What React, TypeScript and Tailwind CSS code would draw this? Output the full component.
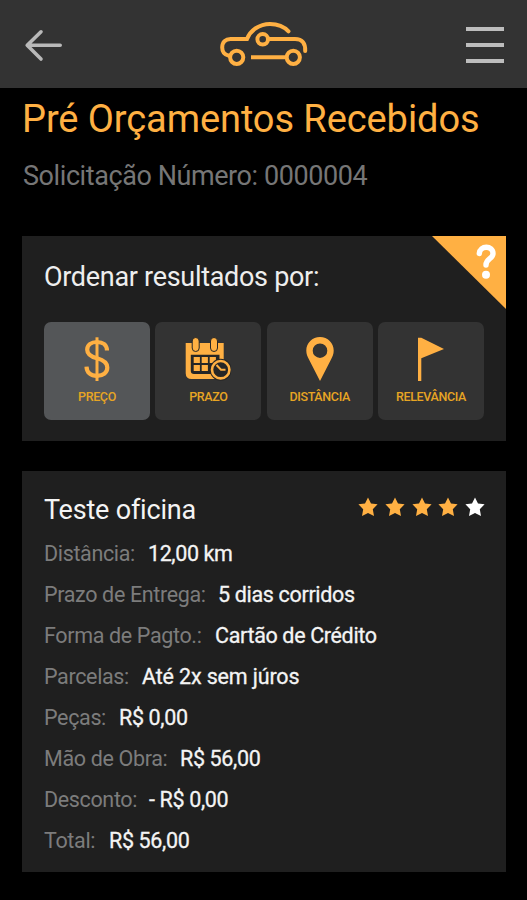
import React from 'react';

interface SortOption {
  id: string;
  label: string;
  icon: React.ReactNode;
}

interface Detail {
  label: string;
  value: string;
  labelClass: string;
  valueClass: string;
}

const CarLogo = () => (
  <svg className="w-[90px] h-[48px]" viewBox="0 0 90 48" fill="none" stroke="#ffb043" strokeWidth="4" strokeLinecap="round">
    <circle cx="17.7" cy="37.3" r="6.6" />
    <circle cx="74.3" cy="37.3" r="6.6" />
    <circle cx="43.7" cy="19.3" r="5.3" />
    <path d="M10 35.8C5.5 34.8 3.2 31.5 3.2 27.5C3.2 22 6.6 18.9 11.5 18.9H28C31.5 10.5 40 3.9 51 3.9C58.5 3.9 65.5 7 69.5 11.3" />
    <path d="M49.5 18.9H76C83.5 18.9 86.6 23.5 86.2 31" />
    <path d="M32 37.3H67" strokeLinecap="butt" />
  </svg>
);

const BackArrow = () => (
  <svg className="w-[38px] h-[34px]" viewBox="0 0 38 34" fill="none" stroke="#b9b9b9" strokeWidth="3.6" strokeLinecap="round" strokeLinejoin="round">
    <path d="M3.4 17.3H36.2M17 3.8L3.2 17.3L17 31" />
  </svg>
);

const DollarIcon = () => (
  <svg className="w-[26px] h-[44px]" viewBox="0 0 26 44" fill="none" stroke="#ffb043">
    <path
      d="M23 13.5C22.8 8 19 5 13 5C7 5 3.2 8.2 3.2 12.7C3.2 17.5 6.8 19.6 13 21.3C19.6 23.1 23.3 25.4 23.3 30.6C23.3 35.6 19.2 38.8 13 38.8C6.6 38.8 2.7 35.4 2.5 29.6"
      strokeWidth="4.2"
    />
    <path d="M13 .3V44" strokeWidth="3" />
  </svg>
);

const CalendarIcon = () => (
  <svg className="w-[46px] h-[44px]" viewBox="0 0 46 44">
    <path d="M.7 6H38.7V36Q38.7 42 32.7 42H6.7Q.7 42 .7 36Z" fill="#ffb043" />
    <path d="M5.8 17.8H34.5V37H9Q5.8 37 5.8 33.8Z" fill="#262626" />
    <path d="M8.7 20h6.2v6H8.7zM16.7 20h6.2v6H16.7zM24.7 20h6.2v6H24.7zM8.7 28h6.2v6H8.7zM16.7 28h6.2v6H16.7z" fill="#ffb043" />
    <rect x="7.2" y="0.5" width="7" height="14" rx="3.5" fill="#ffb043" stroke="#262626" strokeWidth="1" />
    <rect x="25.5" y="0.5" width="7" height="14" rx="3.5" fill="#ffb043" stroke="#262626" strokeWidth="1" />
    <circle cx="35.7" cy="32.7" r="11" fill="#262626" />
    <circle cx="35.7" cy="32.7" r="8.7" fill="none" stroke="#ffb043" strokeWidth="2.6" />
    <path d="M31.5 28L36 32.8H40.5" fill="none" stroke="#ffb043" strokeWidth="2" />
  </svg>
);

const PinIcon = () => (
  <svg className="w-[28px] h-[44px]" viewBox="0 0 28 44">
    <path fillRule="evenodd" fill="#ffb043" d="M14 0C6.3 0 .3 6 .3 13.5C.3 17 1.4 19.4 3 22.5L14 44L25 22.5C26.6 19.4 27.7 17 27.7 13.5C27.7 6 21.7 0 14 0ZM14 6.4A7.3 7.3 0 1 1 14 21A7.3 7.3 0 1 1 14 6.4Z" />
  </svg>
);

const FlagIcon = () => (
  <svg className="w-[28px] h-[44px]" viewBox="0 0 28 44" fill="#ffb043">
    <path d="M1 .8H4.3L27 12L4.3 21.2V44H1Z" />
  </svg>
);

const Star = ({ filled }: { filled: boolean }) => (
  <svg className="w-5 h-5" viewBox="0 0 20 20">
    <path
      d="M10 .6L13 6.5L19.6 7.3L14.8 12.2L16 18.9L10 15.9L4 18.9L5.2 12.2L.4 7.3L7 6.5Z"
      fill={filled ? '#ffb043' : '#ffffff'}
    />
  </svg>
);

const options: SortOption[] = [
  { id: 'preco', label: 'PREÇO', icon: <DollarIcon /> },
  { id: 'prazo', label: 'PRAZO', icon: <CalendarIcon /> },
  { id: 'distancia', label: 'DISTÂNCIA', icon: <PinIcon /> },
  { id: 'relevancia', label: 'RELEVÂNCIA', icon: <FlagIcon /> },
];

const details: Detail[] = [
  { label: 'Distância:', value: '12,00 km', labelClass: 'w-[104px]', valueClass: 'tracking-[-0.4px]' },
  { label: 'Prazo de Entrega:', value: '5 dias corridos', labelClass: 'w-[174px]', valueClass: 'tracking-[-0.33px]' },
  { label: 'Forma de Pagto.:', value: 'Cartão de Crédito', labelClass: 'w-[171px]', valueClass: 'tracking-[-0.35px]' },
  { label: 'Parcelas:', value: 'Até 2x sem júros', labelClass: 'w-[98px]', valueClass: 'tracking-[-0.15px]' },
  { label: 'Peças:', value: 'R$ 0,00', labelClass: 'w-[75px]', valueClass: 'tracking-[-0.35px]' },
  { label: 'Mão de Obra:', value: 'R$ 56,00', labelClass: 'w-[136px]', valueClass: 'tracking-[-0.35px]' },
  { label: 'Desconto:', value: '- R$ 0,00', labelClass: 'w-[105px]', valueClass: 'tracking-[-0.35px]' },
  { label: 'Total:', value: 'R$ 56,00', labelClass: 'w-[65px]', valueClass: 'tracking-[-0.35px]' },
];

const App: React.FC = () => {
  return (
    <div className="w-[527px] h-[900px] overflow-hidden bg-black font-[Roboto,sans-serif] whitespace-nowrap">
      {/* Top bar */}
      <header className="flex items-start justify-between h-[88px] bg-[#333333] pl-6 pr-[23px]">
        <div className="w-[195px] pt-7">
          <BackArrow />
        </div>
        <div className="flex-1 pt-5">
          <CarLogo />
        </div>
        <div className="flex flex-col gap-3 pt-[27px]">
          <div className="w-[38px] h-1 bg-[#bdbdbd]" />
          <div className="w-[38px] h-1 bg-[#bdbdbd]" />
          <div className="w-[38px] h-1 bg-[#bdbdbd]" />
        </div>
      </header>

      <main className="px-[22px]">
        <h1 className="h-[72px] pt-2 text-[38px] leading-[46px] tracking-[-0.08px] text-[#ffb043]">Pré Orçamentos Recebidos</h1>
        <p className="h-[76px] pl-px text-[27px] leading-8 tracking-[-0.42px] text-[#767676]">Solicitação Número: 0000004</p>

        {/* Sorting */}
        <section className="relative w-[484px] h-[205px] bg-[#1f1f1f] px-[22px] pt-[25px]">
          <svg className="absolute top-0 right-0 w-[74px] h-[73px]" viewBox="0 0 74 73">
            <path d="M0 0H74V73Z" fill="#ffb043" />
            <path d="M47.3 17.5C47.8 9 61 9.3 61 17.5C61 23 54 22.5 54 29" fill="none" stroke="#ffffff" strokeWidth="5.4" strokeLinecap="round" />
            <circle cx="54" cy="38.7" r="4" fill="#ffffff" />
          </svg>
          <h2 className="h-[61px] text-[27px] leading-8 tracking-[-0.3px] text-[#eeeeee]">Ordenar resultados por:</h2>
          <div className="flex gap-[5.4px]">
            {options.map(option => (
              <button
                key={option.id}
                className={`flex flex-col items-center w-[106px] h-[98px] rounded-[7px] pt-[15px] text-[#ffb043] ${
                  option.id === 'preco' ? 'bg-[#545658]' : 'bg-[#333333]'
                }`}
              >
                <span className="flex h-[44px]">{option.icon}</span>
                <span className="mt-2 text-[12.5px] leading-4 font-medium tracking-[-0.35px] text-[#e7a523]">{option.label}</span>
              </button>
            ))}
          </div>
        </section>

        {/* Quote */}
        <section className="mt-[30px] w-[484px] h-[401px] bg-[#1f1f1f] px-[22px] pt-[22px]">
          <div className="flex justify-between h-10">
            <h2 className="text-[27px] leading-[34px] tracking-[-0.2px] text-[#f4f4f4]">Teste oficina</h2>
            <div className="flex gap-[6.7px] pt-1 -mr-px">
              {[1, 2, 3, 4, 5].map(n => (
                <Star key={n} filled={n < 5} />
              ))}
            </div>
          </div>
          {details.map(detail => (
            <div key={detail.label} className="flex h-[41px] text-[21.5px] leading-[41px]">
              <span className={`text-[#7c7c7c] tracking-[-0.35px] ${detail.labelClass}`}>{detail.label}</span>
              <span className={`text-[#f4f4f4] [-webkit-text-stroke:0.3px_#f4f4f4] ${detail.valueClass}`}>{detail.value}</span>
            </div>
          ))}
        </section>
      </main>
    </div>
  );
};

export default App;
